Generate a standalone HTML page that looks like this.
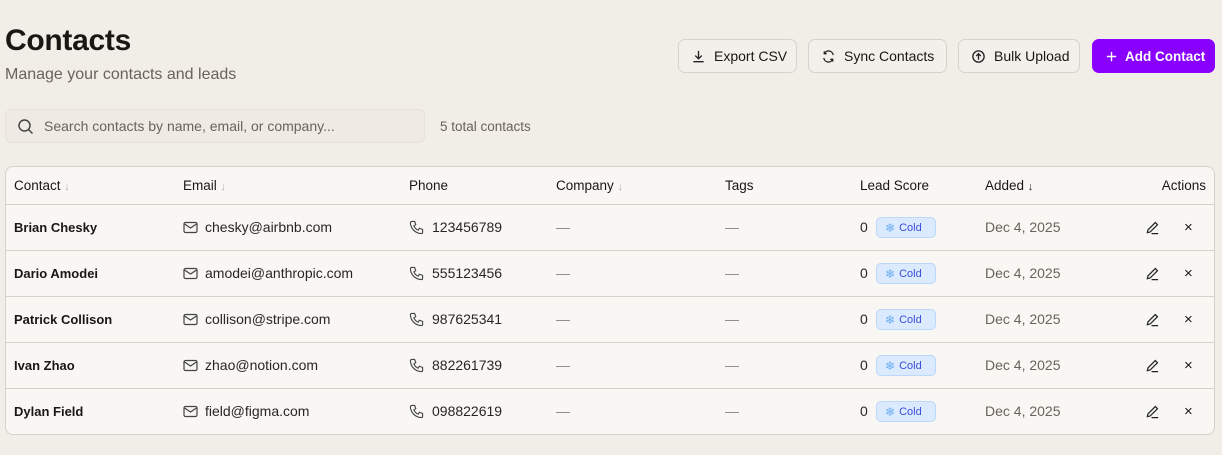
<!DOCTYPE html>
<html><head><meta charset="utf-8"><style>
*{box-sizing:border-box;margin:0;padding:0}
body{width:1222px;height:455px;background:#f1ede7;font-family:"Liberation Sans",sans-serif;color:#1a1614;position:relative;overflow:hidden}
.a{position:absolute;white-space:nowrap}
h1{position:absolute;left:5px;top:24px;font-size:30px;font-weight:700;letter-spacing:-0.3px}
.sub{left:5px;top:66px;font-size:16px;color:#6b625b}
.btn{position:absolute;top:39px;height:34px;border:1px solid #d7d2cb;border-radius:7px;background:#f3efea;font-size:14px;display:flex;align-items:center;padding-left:12px;gap:8px}
.btn svg{width:15px;height:15px}
.search{left:5px;top:109px;width:420px;height:34px;background:#efeae4;border:1px solid #e6e1da;border-radius:7px}
.tbl{left:5px;top:166px;width:1210px;height:269px;background:#f8f7f4;border:1px solid #d6d1ca;border-radius:8px;overflow:hidden}
.hl{position:absolute;left:0;width:100%;height:1px;background:#d6d1ca}
.th{font-size:13.5px;font-weight:400;color:#1a1614;top:11px}
.td{font-size:14px;color:#2a2522}
.arr{color:#b5aea6;font-size:11px}
.badge{width:60px;height:21px;border:1px solid #bcd7f8;background:#dbeafe;border-radius:5px;font-size:11px;color:#3a4fd8;display:flex;align-items:center;padding-left:8px;gap:4px}
</style></head><body>
<h1>Contacts</h1>
<div class="a sub">Manage your contacts and leads</div>

<div class="btn" style="left:678px;width:119px"><svg viewBox="0 0 16 16" fill="none" stroke="#222" stroke-width="1.4"><path d="M8 2v8M4.5 7l3.5 3.5L11.5 7M2.5 13.5h11"/></svg>Export CSV</div>
<div class="btn" style="left:808px;width:139px"><svg viewBox="0 0 16 16" fill="none" stroke="#222" stroke-width="1.4"><path d="M13 6.5A5 5 0 0 0 3.5 5M3 9.5A5 5 0 0 0 12.5 11M3.5 2.5V5H6M12.5 13.5V11H10"/></svg>Sync Contacts</div>
<div class="btn" style="left:958px;width:122px"><svg viewBox="0 0 16 16" fill="none" stroke="#222" stroke-width="1.4"><circle cx="8" cy="8" r="6"/><path d="M8 11.5V5M5.5 7.5L8 5l2.5 2.5"/></svg>Bulk Upload</div>
<div class="btn" style="left:1092px;width:123px;background:#8a00ff;border-color:#8a00ff;color:#fff;font-weight:700;padding-left:11px;gap:6px;font-size:13.5px"><svg viewBox="0 0 16 16" fill="none" stroke="#fff" stroke-width="1.5"><path d="M8 3v10M3 8h10"/></svg>Add Contact</div>

<div class="a search"><svg class="a" style="left:11px;top:8px" width="17" height="17" viewBox="0 0 17 17" fill="none" stroke="#444" stroke-width="1.5"><circle cx="7.5" cy="7.5" r="5.5"/><path d="M11.5 11.5l4 4"/></svg><span class="a" style="left:38px;top:8px;font-size:14px;color:#6b625b">Search contacts by name, email, or company...</span></div>
<div class="a" style="left:440px;top:119px;font-size:13.5px;color:#6b625b">5 total contacts</div>

<div class="a tbl">
<div class="a th" style="left:8px">Contact <span class="arr">↓</span></div>
<div class="a th" style="left:177px">Email <span class="arr">↓</span></div>
<div class="a th" style="left:403px">Phone</div>
<div class="a th" style="left:550px">Company <span class="arr">↓</span></div>
<div class="a th" style="left:719px">Tags</div>
<div class="a th" style="left:854px">Lead Score</div>
<div class="a th" style="left:979px">Added <span style="font-size:11px">↓</span></div>
<div class="a th" style="right:8px">Actions</div>
<div class="hl" style="top:37px"></div>
<div class="hl" style="top:83px"></div>
<div class="hl" style="top:129px"></div>
<div class="hl" style="top:175px"></div>
<div class="hl" style="top:221px"></div>
</div>

<div id="rows"></div>
<script>
var d=[["Brian Chesky","chesky@airbnb.com","123456789"],["Dario Amodei","amodei@anthropic.com","555123456"],["Patrick Collison","collison@stripe.com","987625341"],["Ivan Zhao","zhao@notion.com","882261739"],["Dylan Field","field@figma.com","098822619"]];
var h="";
d.forEach(function(r,i){var y=219+i*46;
h+='<div class="a td" style="left:14px;top:'+(y+1)+'px;font-weight:700;color:#1a1614;font-size:13px">'+r[0]+'</div>';
h+='<svg class="a" style="left:183px;top:'+(y+2)+'px" width="15" height="13" viewBox="0 0 15 13" fill="none" stroke="#444" stroke-width="1.2"><rect x="1" y="1.5" width="13" height="10" rx="1.5"/><path d="M1.5 3l6 4 6-4"/></svg>';
h+='<div class="a td" style="left:205px;top:'+y+'px">'+r[1]+'</div>';
h+='<svg class="a" style="left:409px;top:'+(y+1)+'px" width="15" height="15" viewBox="0 0 16 16" fill="none" stroke="#444" stroke-width="1.2"><path d="M3 1.5h3l1.2 3.5-2 1.2a8 8 0 0 0 4.6 4.6l1.2-2 3.5 1.2v3a1.5 1.5 0 0 1-1.5 1.5A12 12 0 0 1 1.5 3 1.5 1.5 0 0 1 3 1.5z"/></svg>';
h+='<div class="a td" style="left:432px;top:'+y+'px">'+r[2]+'</div>';
h+='<div class="a td" style="left:556px;top:'+y+'px;color:#888">—</div>';
h+='<div class="a td" style="left:725px;top:'+y+'px;color:#888">—</div>';
h+='<div class="a td" style="left:860px;top:'+y+'px">0</div>';
h+='<div class="a badge" style="left:876px;top:'+(y-2)+'px"><span style="color:#6aaef0;font-size:12px">❄</span>Cold</div>';
h+='<div class="a td" style="left:985px;top:'+y+'px;color:#6b625b">Dec 4, 2025</div>';
h+='<svg class="a" style="left:1145px;top:'+(y+1)+'px" width="15" height="15" viewBox="0 0 16 16" fill="none" stroke="#222" stroke-width="1.3"><path d="M2.5 13.5l.7-3L11 2.7l2.3 2.3L5.5 12.8zM7 14.5h7"/></svg>';
h+='<div class="a" style="left:1184px;top:'+y+'px;font-size:15px">×</div>';
});
document.getElementById("rows").innerHTML=h;
</script>
</body></html>
